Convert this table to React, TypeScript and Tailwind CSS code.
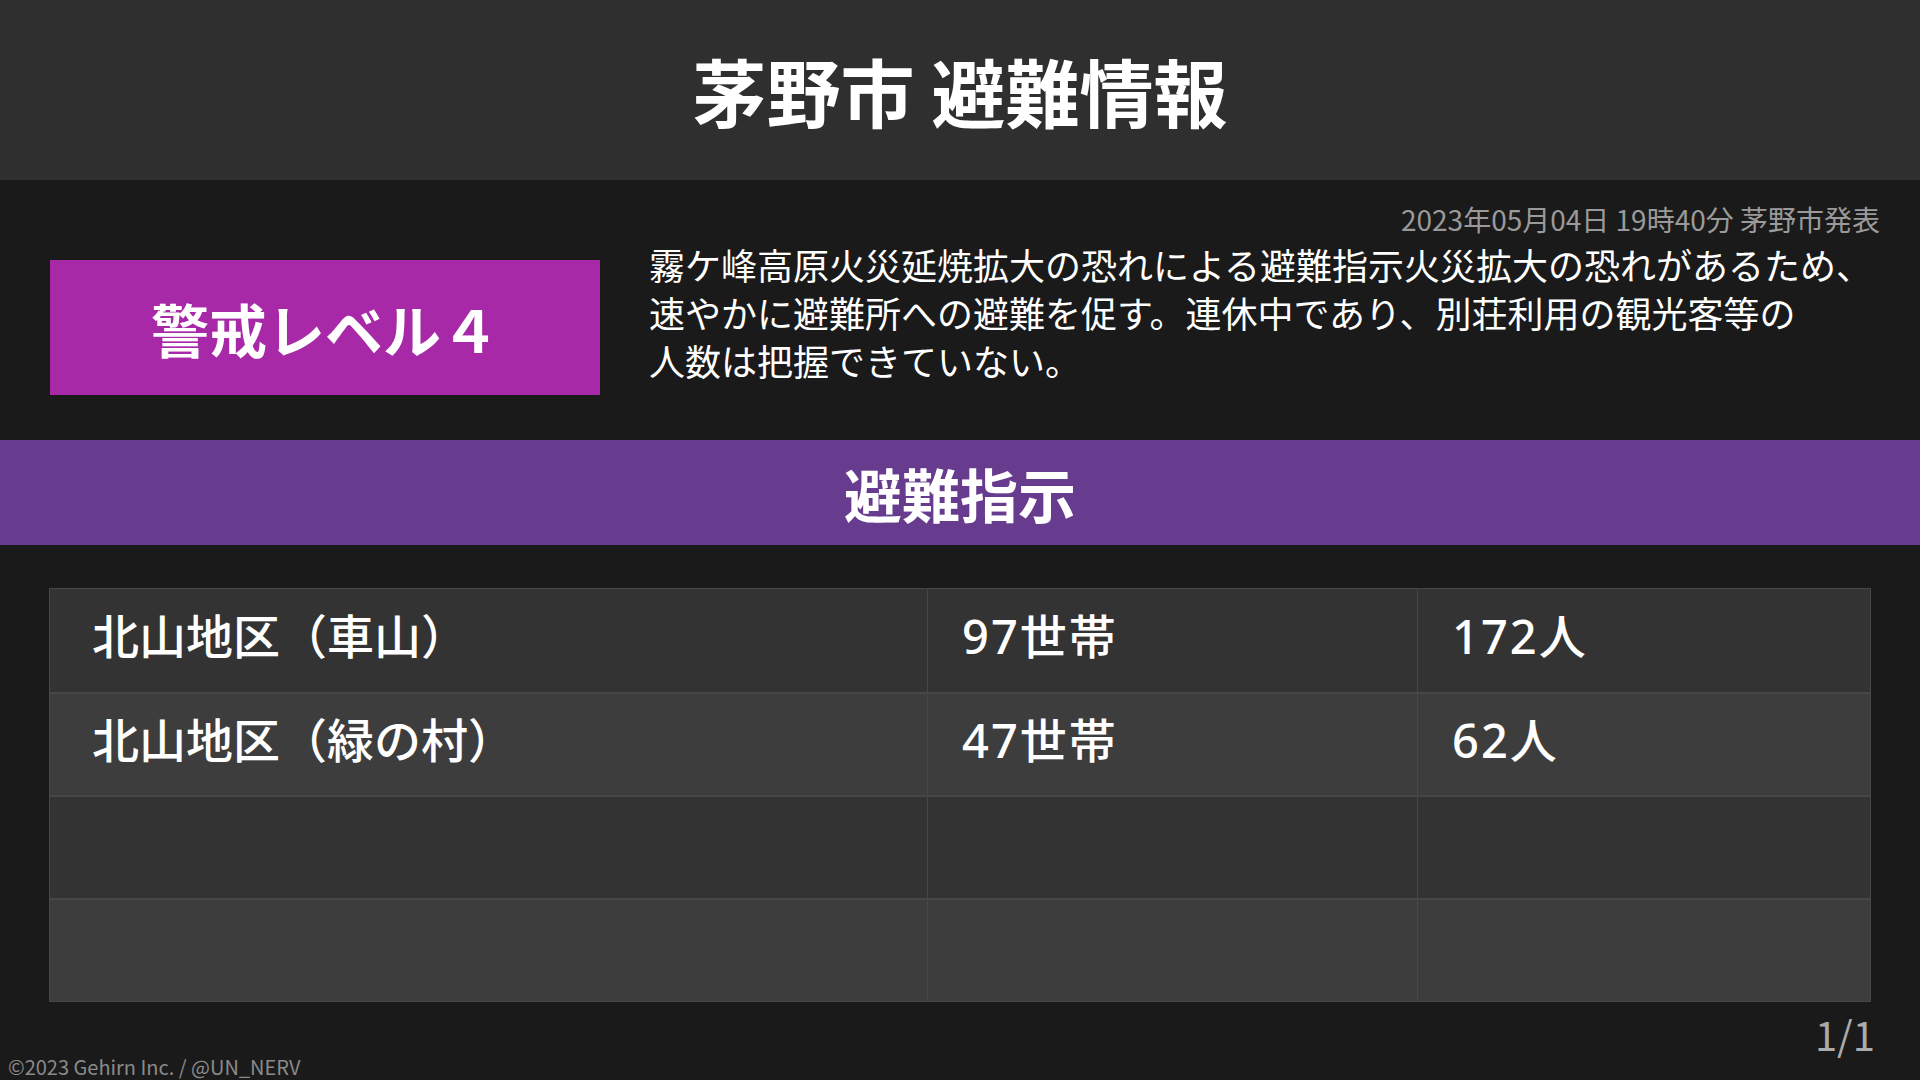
import React from "react";

const ROWS = [
  { area: "北山地区（車山）", households: "97世帯", people: "172人" },
  { area: "北山地区（緑の村）", households: "47世帯", people: "62人" },
  { area: "", households: "", people: "" },
  { area: "", households: "", people: "" },
];

export default function App() {
  return (
    <main
      className="w-[1920px] h-[1080px] overflow-hidden bg-[#1a1a1a] text-white flex flex-col"
      style={{ fontFamily: '"Noto Sans CJK JP", "Noto Sans", sans-serif' }}
    >
      {/* Header */}
      <header className="h-[180px] shrink-0 bg-[#2f2f2f] flex items-center justify-center">
        <h1 className="text-[74px] font-bold leading-none">茅野市 避難情報</h1>
      </header>

      {/* Summary */}
      <section className="h-[260px] shrink-0 px-[40px] pt-[19px]">
        <div className="text-right text-[28px] leading-[40px] text-[#9a9a9a]">
          2023年05月04日 19時40分 茅野市発表
        </div>
        <div className="flex items-start mt-[1px] pl-[10px]">
          <div className="mt-[20px] w-[550px] h-[135px] shrink-0 bg-[#a829a8] flex items-center justify-center">
            <span className="text-[58px] font-bold leading-none">警戒レベル４</span>
          </div>
          <p className="ml-[49px] text-[36px] leading-[48px] whitespace-nowrap">
            霧ケ峰高原火災延焼拡大の恐れによる避難指示火災拡大の恐れがあるため、
            <br />
            速やかに避難所への避難を促す。連休中であり、別荘利用の観光客等の
            <br />
            人数は把握できていない。
          </p>
        </div>
      </section>

      {/* Category band */}
      <div className="h-[105px] shrink-0 bg-[#673b8d] flex items-center justify-center">
        <h2 className="text-[58px] font-bold leading-none">避難指示</h2>
      </div>

      {/* Table */}
      <div
        className="mt-[43px] mx-[49px] border border-[#474747]"
        style={{ fontFamily: '"Noto Sans", "Noto Sans CJK JP", sans-serif' }}
      >
        {ROWS.map((row, i) => (
          <div
            key={i}
            className={`grid grid-cols-[877px_490px_1fr] h-[103px] ${
              i > 0 ? "border-t-2 border-[#474747]" : ""
            } ${i % 2 === 0 ? "bg-[#333333]" : "bg-[#3d3d3d]"}`}
          >
            <div className="flex items-center pl-[42px] pb-[8px] text-[47px] font-medium leading-none">
              {row.area}
            </div>
            <div className="flex items-center pl-[34px] pb-[8px] text-[47px] font-medium leading-none tracking-[2px] border-l border-[#474747]">
              {row.households}
            </div>
            <div className="flex items-center pl-[34px] pb-[8px] text-[47px] font-medium leading-none tracking-[2px] border-l border-[#474747]">
              {row.people}
            </div>
          </div>
        ))}
      </div>

      {/* Footer */}
      <div className="mt-[12px] pr-[45px] text-right text-[40px] leading-none text-[#ababab]">1/1</div>
      <div className="mt-[2px] pl-[8px] text-[20px] leading-[22px] text-[#8a8a8a]">
        ©2023 Gehirn Inc. / @UN_NERV
      </div>
    </main>
  );
}
